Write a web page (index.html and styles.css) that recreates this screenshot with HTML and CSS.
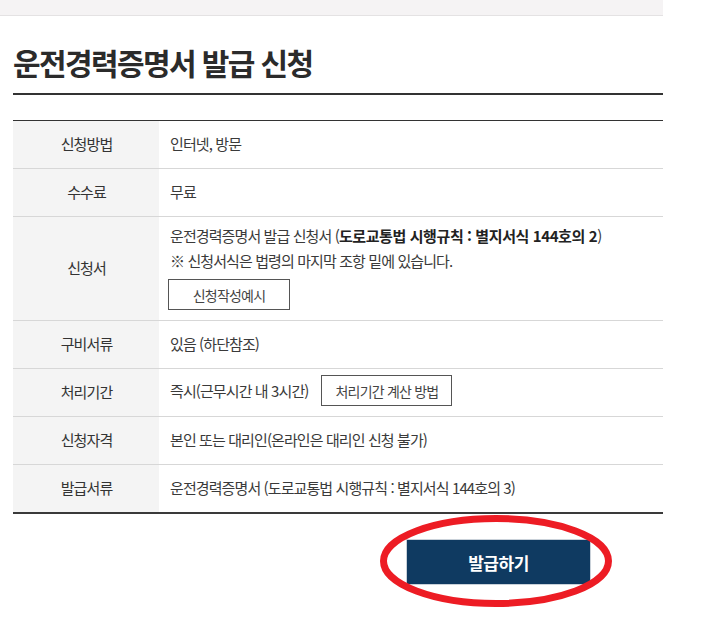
FILE: index.html
```html
<!DOCTYPE html>
<html lang="ko">
<head>
<meta charset="utf-8">
<title>운전경력증명서 발급 신청</title>
<link rel="stylesheet" href="styles.css">
</head>
<body>
<div class="page">
  <div class="topbar"></div>
  <div class="content">
    <h1 class="title">운전경력증명서 발급 신청</h1>
    <table class="info">
      <tbody>
        <tr>
          <th>신청방법</th>
          <td>인터넷, 방문</td>
        </tr>
        <tr>
          <th>수수료</th>
          <td>무료</td>
        </tr>
        <tr>
          <th>신청서</th>
          <td class="multi">
            <div>운전경력증명서 발급 신청서 (<strong>도로교통법 시행규칙 : 별지서식 144호의 2</strong>)</div>
            <div>※ 신청서식은 법령의 마지막 조항 밑에 있습니다.</div>
            <button class="outline wide" type="button">신청작성예시</button>
          </td>
        </tr>
        <tr>
          <th>구비서류</th>
          <td>있음 (하단참조)</td>
        </tr>
        <tr>
          <th>처리기간</th>
          <td class="with-btn">
            <div class="line">
              <span>즉시(근무시간 내 3시간)</span>
              <button class="outline inline" type="button">처리기간 계산 방법</button>
            </div>
          </td>
        </tr>
        <tr>
          <th>신청자격</th>
          <td>본인 또는 대리인(온라인은 대리인 신청 불가)</td>
        </tr>
        <tr>
          <th>발급서류</th>
          <td>운전경력증명서 (도로교통법 시행규칙 : 별지서식 144호의 3)</td>
        </tr>
      </tbody>
    </table>
    <div class="actions">
      <span class="submit-wrap">
        <button class="submit" type="button">발급하기</button>
        <svg class="circle" viewBox="0 0 232 92" width="232" height="92" aria-hidden="true">
          <ellipse cx="116" cy="46" rx="112.5" ry="42.5" fill="none" stroke="#ed1c24" stroke-width="7"/>
        </svg>
      </span>
    </div>
  </div>
</div>
</body>
</html>
```
FILE: styles.css
```css
* { box-sizing: border-box; }

html, body {
  margin: 0;
  padding: 0;
  background: #fff;
}

body {
  font-family: "Noto Sans CJK KR", "Noto Sans", sans-serif;
  color: #333;
}

.page {
  width: 663px;
  padding-bottom: 40px;
}

.topbar {
  height: 16px;
  background: #f5f3f4;
  border-bottom: 1px solid #e4e2e3;
}

.content {
  padding-left: 13px;
}

.title {
  margin: 26px 0 0 0;
  padding: 0 0 11px 0;
  font-size: 30px;
  line-height: 40px;
  font-weight: 700;
  letter-spacing: -1.6px;
  color: #2b2b2b;
  border-bottom: 2px solid #333;
}

.info {
  width: 100%;
  margin-top: 25px;
  border-collapse: collapse;
  border-top: 1px solid #333;
  border-bottom: 2px solid #3a3a3a;
  font-size: 15px;
  line-height: 25px;
  letter-spacing: -0.9px;
}

.info th,
.info td {
  border-top: 1px solid #d7d7d7;
  padding: 10px 10px 12px 11px;
  vertical-align: middle;
}

.info tr:first-child th,
.info tr:first-child td {
  border-top: none;
}

.info th {
  width: 146px;
  background: #f4f4f4;
  font-weight: 400;
  color: #333;
  text-align: center;
}

.info td {
  text-align: left;
  color: #3a3a3a;
}

.info td.multi {
  padding-top: 6px;
  padding-bottom: 10px;
}

.info td.with-btn {
  padding-top: 6px;
  padding-bottom: 10px;
}

.line {
  display: flex;
  align-items: center;
  gap: 13px;
}

.info strong {
  font-weight: 700;
  letter-spacing: -0.4px;
  color: #222;
}

.outline {
  font-family: inherit;
  font-size: 14px;
  letter-spacing: -0.8px;
  color: #444;
  background: #fff;
  border: 1px solid #555;
  height: 31px;
  padding: 0;
  margin: 0;
  cursor: pointer;
}

.outline.wide {
  display: block;
  width: 122px;
  margin: 6px 0 0 -2px;
}

.outline.inline {
  width: 131px;
}

.actions {
  display: flex;
  justify-content: flex-end;
  padding-right: 72px;
  margin-top: 25px;
}

.submit-wrap {
  position: relative;
  display: block;
}

.submit {
  display: block;
  width: 185px;
  height: 46px;
  background: #0f3a61;
  border: 1px solid #c9d1d9;
  color: #fff;
  font-family: inherit;
  font-size: 17px;
  font-weight: 700;
  letter-spacing: -0.5px;
  cursor: pointer;
}

.circle {
  position: absolute;
  left: -26px;
  top: -24px;
  pointer-events: none;
}
```
